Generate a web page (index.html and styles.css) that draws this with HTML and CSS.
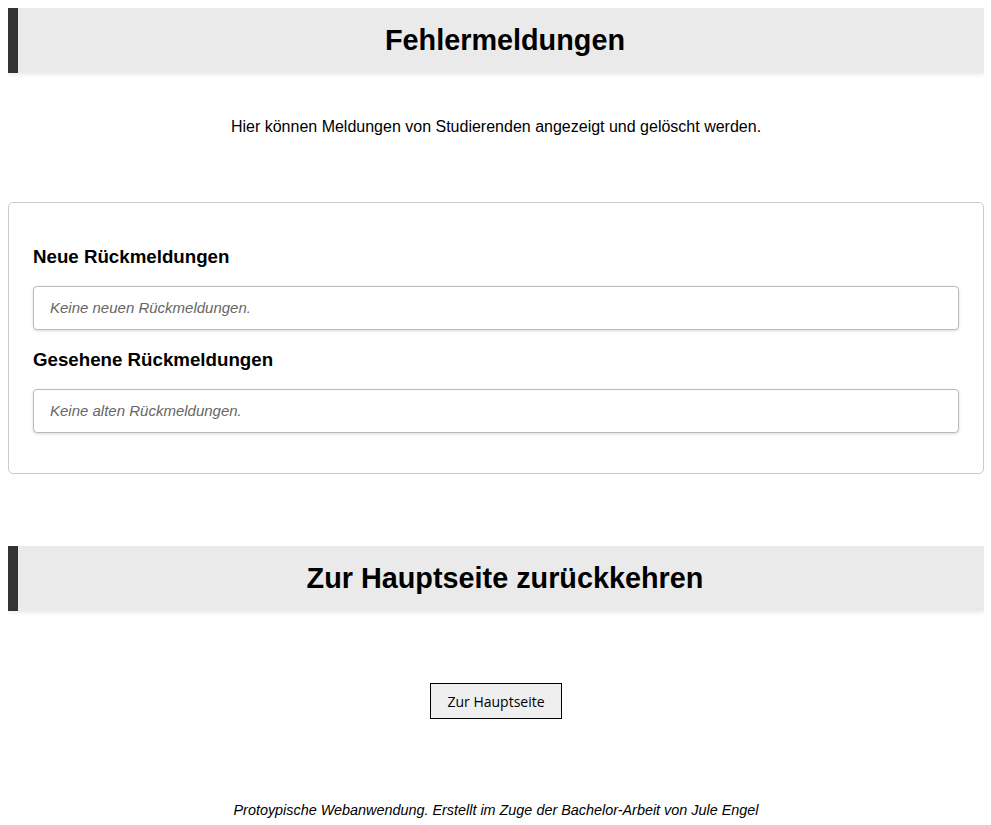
FILE: index.html
```html
<!DOCTYPE html>
<html lang="de">
<head>
<meta charset="utf-8">
<title>Fehlermeldungen</title>
<link rel="stylesheet" href="styles.css">
</head>
<body>
<header class="banner">
  <h1 class="banner-title">Fehlermeldungen</h1>
</header>
<p class="intro">Hier können Meldungen von Studierenden angezeigt und gelöscht werden.</p>
<section class="card">
  <h3 class="card-heading">Neue Rückmeldungen</h3>
  <div class="message-box">Keine neuen Rückmeldungen.</div>
  <h3 class="card-heading">Gesehene Rückmeldungen</h3>
  <div class="message-box">Keine alten Rückmeldungen.</div>
</section>
<header class="banner banner-second">
  <h2 class="banner-title">Zur Hauptseite zurückkehren</h2>
</header>
<div class="actions">
  <button class="home-button" type="button">Zur Hauptseite</button>
</div>
<footer class="footer">Protoypische Webanwendung. Erstellt im Zuge der Bachelor-Arbeit von Jule Engel</footer>
</body>
</html>
```
FILE: styles.css
```css
html, body {
  background: #ffffff;
}
body {
  margin: 8px 7px 8px 8px;
  font-family: "Liberation Sans", Arial, sans-serif;
  color: #000;
}
.banner {
  background: #eaeaea;
  border-left: 10px solid #333333;
  box-shadow: 0 2px 4px rgba(0, 0, 0, 0.08);
  height: 65px;
  padding-left: 8px;
  display: flex;
  align-items: center;
  justify-content: center;
}
.banner-title {
  margin: 0;
  font-size: 28.8px;
  font-weight: bold;
  line-height: 33px;
}
.intro {
  margin: 45px 0 66px;
  text-align: center;
  font-size: 16px;
  line-height: 18px;
}
.card {
  border: 1px solid #cccccc;
  border-radius: 5px;
  padding: 24px 24px 40px;
}
.card-heading {
  margin: 19px 0 18px;
  font-size: 18.72px;
  font-weight: bold;
  line-height: 22px;
}
.message-box {
  border: 1px solid #bbbbbb;
  border-radius: 4px;
  box-shadow: 0 1px 3px rgba(0, 0, 0, 0.15);
  padding: 12px 16px;
  font-size: 15px;
  line-height: 18px;
  font-style: italic;
  color: #666666;
}
.banner-second {
  margin-top: 72px;
}
.actions {
  display: flex;
  justify-content: center;
  margin-top: 72px;
}
.home-button {
  font-family: "Open Sans", "DejaVu Sans", sans-serif;
  font-size: 14px;
  background: #efefef;
  border: 1px solid #000000;
  border-radius: 0;
  width: 132px;
  height: 36px;
  padding: 0;
  color: #000;
}
.footer {
  margin-top: 83px;
  text-align: center;
  font-style: italic;
  font-size: 14.4px;
  line-height: 16px;
}
```
